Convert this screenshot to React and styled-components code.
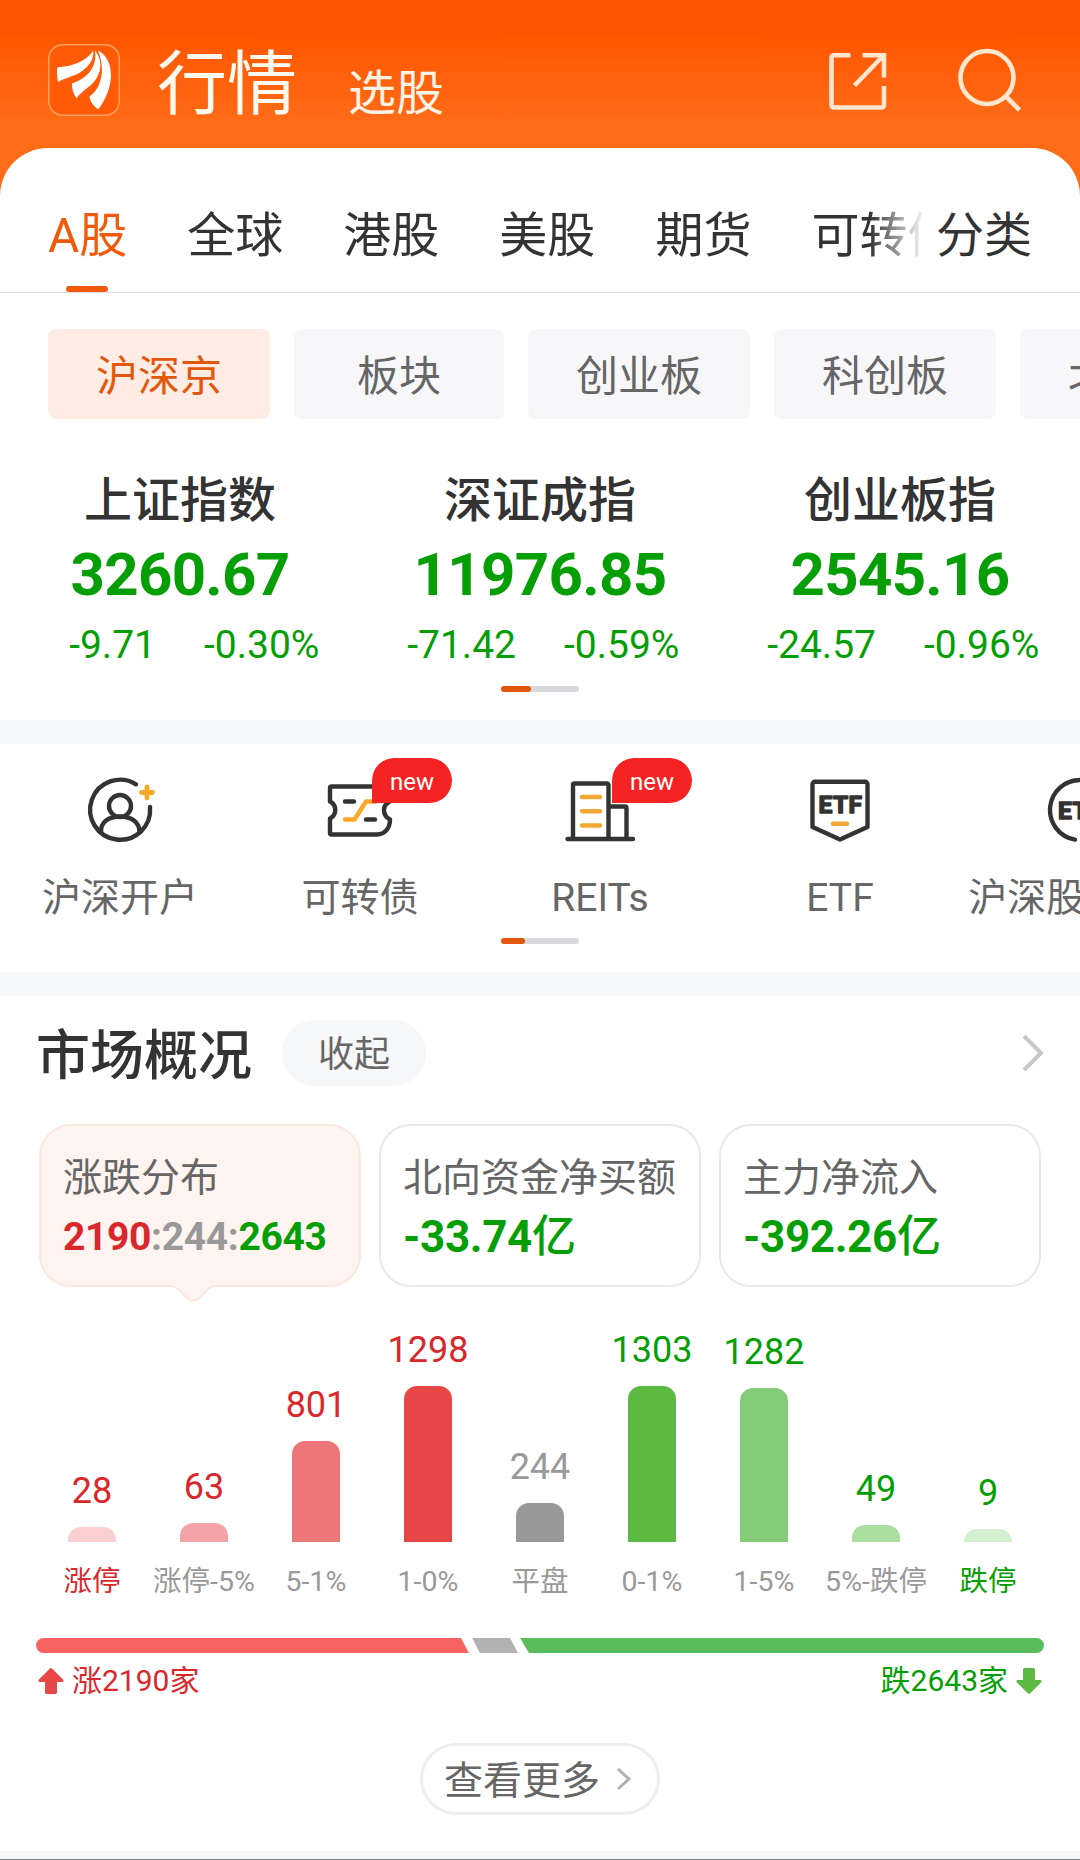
import React from 'react';

import styled, { createGlobalStyle, css } from 'styled-components';

const GlobalStyle = createGlobalStyle`
  * {
    box-sizing: border-box;
  }

  body {
    margin: 0;
    background: #fff;
    font-family: Roboto, 'Noto Sans CJK SC', sans-serif;
    color: #333;
  }
`;

const colors = {
  up: '#d9282b',
  down: '#059f05',
  flat: '#999',
};

const Page = styled.div`
  display: flex;
  flex-direction: column;
  width: 1080px;
  height: 1860px;
  overflow: hidden;
  background: linear-gradient(#ff5500 0, #ff5500 32px, #ff6c18 125px, #ff6c18 200px);
`;

const Header = styled.header`
  display: flex;
  align-items: center;
  height: 148px;
  padding: 12px 58px 0 48px;
`;

const Title = styled.h1`
  margin: 9px 0 0 37px;
  font-size: 70px;
  font-weight: 400;
  line-height: 80px;
  color: #fffaf0;
`;

const SubTitle = styled.span`
  margin: 27px auto 0 51px;
  font-size: 48px;
  line-height: 60px;
  color: #fff3e6;
`;

const HeaderIcons = styled.div`
  display: flex;
  align-items: center;
  gap: 68px;
`;

const Sheet = styled.main`
  flex: 1;
  display: flex;
  flex-direction: column;
  background: #fff;
  border-radius: 48px 48px 0 0;
`;

const TabBar = styled.nav`
  display: flex;
  height: 145px;
  padding: 0 48px;
  border-bottom: 1px solid #dedede;
`;

const TabScroll = styled.div`
  display: flex;
  gap: 60px;
  width: 874px;
  margin-right: 14px;
  overflow: hidden;
  white-space: nowrap;
  mask-image: linear-gradient(90deg, #000 822px, rgba(0, 0, 0, 0.2) 866px, transparent 880px);
`;

const Tab = styled.div`
  display: flex;
  flex-direction: column;
  align-items: center;
  justify-content: flex-end;
  flex-shrink: 0;
  font-size: 48px;
  line-height: 60px;
  color: ${({ $active }) => ($active ? '#f05a0a' : '#333')};

  &::after {
    content: '';
    width: 42px;
    height: 6px;
    margin: 20px 2px 0 0;
    border-radius: 3px;
    background: ${({ $active }) => ($active ? '#f05a0a' : 'transparent')};
  }
`;

const Chips = styled.div`
  display: flex;
  gap: 24px;
  padding: 36px 0 0 48px;
  overflow: hidden;
`;

const Chip = styled.div`
  flex-shrink: 0;
  min-width: 210px;
  height: 90px;
  padding: 0 48px;
  border-radius: 8px;
  font-size: 42px;
  line-height: 96px;
  text-align: center;
  white-space: nowrap;
  color: ${({ $active }) => ($active ? '#e2570c' : '#666')};
  background: ${({ $active }) => ($active ? '#ffede5' : '#f7f7f9')};
`;

const Indices = styled.section`
  display: grid;
  grid-template-columns: repeat(3, 360px);
  padding-top: 52px;
`;

const IndexCard = styled.div`
  display: flex;
  flex-direction: column;
  align-items: center;
  color: ${colors.down};
`;

const IndexName = styled.div`
  font-size: 48px;
  font-weight: 500;
  line-height: 60px;
  color: #333;
`;

const IndexValue = styled.div`
  margin-top: 9px;
  font-size: 60px;
  font-weight: 700;
  line-height: 70px;
  letter-spacing: -0.7px;
`;

const IndexChange = styled.div`
  display: grid;
  grid-template-columns: 1fr 1fr;
  column-gap: 48px;
  width: 100%;
  margin-top: 12px;
  font-size: 39px;
  line-height: 46px;

  span:first-child {
    text-align: right;
  }
`;

const Pager = styled.div`
  width: 78px;
  height: 6px;
  margin: ${({ $top }) => $top}px auto 28px;
  border-radius: 3px;
  background: #d8d9dd;

  &::before {
    content: '';
    display: block;
    width: ${({ $thumb }) => $thumb}px;
    height: 6px;
    border-radius: 3px;
    background: #e2570c;
  }
`;

const Divider = styled.div`
  flex-shrink: 0;
  height: 24px;
  background: #f6f7f9;
`;

const Entries = styled.section`
  display: flex;
  padding-top: 26px;
  overflow: hidden;
`;

const Entry = styled.div`
  position: relative;
  display: flex;
  flex-direction: column;
  align-items: center;
  flex: 0 0 240px;
  font-size: 39px;
  line-height: 48px;
  white-space: nowrap;
  color: #666;

  svg {
    margin-bottom: 24px;
  }
`;

const Badge = styled.span`
  position: absolute;
  top: -12px;
  left: 132px;
  width: 80px;
  height: 45px;
  border-radius: 23px 23px 23px 0;
  background: #f52323;
  font-size: 24px;
  line-height: 49px;
  text-align: center;
  color: #fff;
`;

const Overview = styled.section`
  display: flex;
  flex-direction: column;
  flex: 1;
  padding: 24px 36px 0;
`;

const OverviewHead = styled.div`
  display: flex;
  align-items: center;
  height: 66px;
`;

const OverviewTitle = styled.h2`
  margin: 7px 0 0;
  font-size: 54px;
  font-weight: 500;
  line-height: 66px;
`;

const Collapse = styled.div`
  width: 144px;
  height: 66px;
  margin: 0 auto 0 30px;
  border-radius: 33px;
  background: #f6f7f9;
  font-size: 36px;
  line-height: 71px;
  text-align: center;
  color: #666;
`;

const Cards = styled.div`
  display: flex;
  gap: 18px;
  padding: 38px 3px 0;
`;

const Card = styled.div`
  position: relative;
  flex: 1;
  height: 163px;
  padding: 27px 0 0 22px;
  border: 2px solid #e8e8e8;
  border-radius: 32px;
  white-space: nowrap;

  ${({ $active }) =>
    $active &&
    css`
      border-color: #fde8e0;
      background: #fff4ef;
    `}
`;

const Tail = styled.svg`
  position: absolute;
  left: 132px;
  top: 159px;
`;

const CardLabel = styled.div`
  font-size: 39px;
  line-height: 50px;
  color: #666;
`;

const CardValue = styled.div`
  margin-top: 8px;
  font-size: ${({ $size }) => $size}px;
  font-weight: 700;
  line-height: 52px;
  letter-spacing: -0.35px;
  color: ${colors.down};
`;

const CjkUnit = styled.span`
  font-weight: 500;
`;

const Tone = styled.span`
  color: ${({ $tone }) => colors[$tone]};
`;

const Chart = styled.div`
  display: grid;
  grid-template-columns: repeat(9, 112px);
  height: 313px;
`;

const Column = styled.div`
  display: flex;
  flex-direction: column;
  align-items: center;
  justify-content: flex-end;
`;

const BarValue = styled.div`
  margin-bottom: 15px;
  font-size: 36px;
  line-height: 42px;
  color: ${({ $tone }) => colors[$tone]};
`;

const Bar = styled.div`
  width: 48px;
  border-radius: 13px 13px 0 0;
  background: ${({ $color }) => $color};
`;

const BarLabel = styled.div`
  margin-top: 22px;
  font-size: 28.5px;
  line-height: 36px;
  white-space: nowrap;
  color: ${({ $tone }) => colors[$tone]};
`;

const Ratio = styled.svg`
  display: block;
  margin-top: 38px;
`;

const RatioText = styled.div`
  display: flex;
  justify-content: space-between;
  margin-top: 8px;
  padding: 0 2px;
  font-size: 30px;
  line-height: 40px;
`;

const RatioSide = styled.div`
  display: flex;
  align-items: center;
  gap: 8px;
  color: ${({ $tone }) => colors[$tone]};
`;

const More = styled.div`
  display: flex;
  align-items: center;
  align-self: center;
  gap: 16px;
  width: 240px;
  height: 72px;
  margin-top: 42px;
  padding-left: 21px;
  border: 3px solid #eee;
  border-radius: 36px;
  font-size: 39px;
  line-height: 66px;
  color: #666;

  span {
    padding-top: 3px;
  }
`;

const BottomEdge = styled.div`
  flex-shrink: 0;
  height: 9px;
  border-bottom: 1px solid #808285;
  background: #f6f7f9;
`;

const Logo = () => (
  <svg width="72" height="72" viewBox="0 0 72 72">
    <rect x="0.75" y="0.75" width="70.5" height="70.5" rx="14" fill="#ff5a05" stroke="#ffa05c" strokeWidth="1.5" />
    <g fill="#fff">
      <path d="M9.2 23.4C24 22.5 38 18 45.2 6.6C46 15 42 22 32 28.5C25 32.5 16 34.5 10 38C9 33 8.8 28 9.2 23.4Z" />
      <path d="M47 6.6C53 14 54.5 24 49 33.5C44.5 42 34.5 46 28.5 54.3C25.5 50 23.8 45 24 39.5C34 36.5 50 27 47 6.6Z" />
      <path d="M50 6.6C58.5 11 63 20 63 31C63 43 57.5 56 50.3 65.5C46 62.5 42.5 58.5 41.5 52.6C50 47 59.5 31 50 6.6Z" />
    </g>
  </svg>
);

const ShareIcon = () => (
  <svg width="60" height="60" viewBox="0 0 60 60" fill="none" stroke="#ffe6cf" strokeWidth="4.6">
    <path d="M22.5 5.2H6a2.5 2.5 0 0 0-2.5 2.5V55a2.5 2.5 0 0 0 2.5 2.5H53.5a2.5 2.5 0 0 0 2.5-2.5V36" />
    <path d="M34.5 5.2H56V27.5M55 6L26.5 35.5" />
  </svg>
);

const SearchIcon = () => (
  <svg width="66" height="66" viewBox="0 0 66 66" fill="none" stroke="#ffe6cf" strokeWidth="4.6">
    <circle cx="31" cy="30.5" r="26.5" />
    <path d="M50 49.5L63.5 63" />
  </svg>
);

const Chevron = ({ width, height, color, stroke }) => (
  <svg width={width} height={height} fill="none" stroke={color} strokeWidth={stroke}>
    <path d={`M2 2L${width - 3} ${height / 2}L2 ${height - 2}`} />
  </svg>
);

const EntryIcon = ({ children }) => (
  <svg width="80" height="80" viewBox="0 0 80 80" fill="none" stroke="#333" strokeWidth="4.4" strokeLinecap="round" strokeLinejoin="round">
    {children}
  </svg>
);

const AccountIcon = () => (
  <EntryIcon>
    <path d="M56 14.3A30 30 0 1 0 70 37" />
    <circle cx="40" cy="36" r="11" />
    <path d="M21 62.5C20.5 52 28.5 46.5 40 46.5S59.5 52 59.5 62.5" />
    <path d="M67 17V28M61.5 22.5H72.5" stroke="#f9a827" strokeWidth="4.8" />
  </EntryIcon>
);

const BondIcon = () => (
  <EntryIcon>
    <path d="M56 16.5H11.5a1.500 1.500 0 0 0-1.5 1.5V31.5C17 35 17 45 10 48.5V63a1.500 1.500 0 0 0 1.5 1.5H57C65 64.500 70 58 70 49.500C62 45 62 35 70 31.5" />
    <path d="M25 31.5H34M46 49.5H55" />
    <path d="M25 49.5H34.500L46 31.5H56" stroke="#f9a827" />
  </EntryIcon>
);

const ReitsIcon = () => (
  <EntryIcon>
    <path d="M13 68V15a1.500 1.500 0 0 1 1.500-1.500H47a1.500 1.500 0 0 1 1.500 1.500V68" />
    <path d="M49 36.5H65a1.500 1.500 0 0 1 1.500 1.500V68M7.500 69H73" />
    <path d="M22 27H40M22 41.200H40M22 55.500H40" stroke="#f3a735" />
  </EntryIcon>
);

const IconText = (props) => (
  <text
    fill="#333"
    stroke="#333"
    strokeWidth="1.5"
    fontFamily="Roboto, sans-serif"
    fontWeight="700"
    fontSize="24.5"
    letterSpacing="0.5"
    textAnchor="middle"
    {...props}
  >
    ETF
  </text>
);

const EtfIcon = () => (
  <EntryIcon>
    <path d="M15 11.7H65a2.500 2.500 0 0 1 2.500 2.500V57L40 69.500L12.500 57V14.200a2.500 2.500 0 0 1 2.500-2.500Z" />
    <IconText x="40.5" y="43" />
    <path d="M33 53.8H47" stroke="#f3a735" />
  </EntryIcon>
);

const StockEtfIcon = () => (
  <EntryIcon>
    <path d="M35 69.6A30 30 0 1 1 70 40" />
    <IconText x="40" y="49" />
  </EntryIcon>
);

const Arrow = ({ color, down }) => (
  <svg width="26" height="28" viewBox="0 0 26 28">
    <path
      d="M12 1.5a1.500 1.500 0 0 1 2 0L25 12.500Q26.500 15 24 15H19V25.500a1.500 1.500 0 0 1-1.500 1.500H8.500a1.500 1.500 0 0 1-1.500-1.500V15H2Q-.5 15 1 12.500Z"
      fill={color}
      transform={down ? 'rotate(180 13 14)' : undefined}
    />
  </svg>
);

const tabs = ['A股', '全球', '港股', '美股', '期货', '可转债'];

const chips = ['沪深京', '板块', '创业板', '科创板', '北交所'];

const indices = [
  { name: '上证指数', value: '3260.67', change: '-9.71', percent: '-0.30%' },
  { name: '深证成指', value: '11976.85', change: '-71.42', percent: '-0.59%' },
  { name: '创业板指', value: '2545.16', change: '-24.57', percent: '-0.96%' },
];

const entries = [
  { label: '沪深开户', Icon: AccountIcon },
  { label: '可转债', Icon: BondIcon, isNew: true },
  { label: 'REITs', Icon: ReitsIcon, isNew: true },
  { label: 'ETF', Icon: EtfIcon },
  { label: '沪深股票ETF', Icon: StockEtfIcon },
];

const bars = [
  { label: '涨停', value: 28, height: 15, color: '#fbcfd0', tone: 'up', strong: true },
  { label: '涨停-5%', value: 63, height: 19, color: '#f4a4a9', tone: 'up' },
  { label: '5-1%', value: 801, height: 101, color: '#ed7678', tone: 'up' },
  { label: '1-0%', value: 1298, height: 156, color: '#e74747', tone: 'up' },
  { label: '平盘', value: 244, height: 39, color: '#999', tone: 'flat' },
  { label: '0-1%', value: 1303, height: 156, color: '#5cb942', tone: 'down' },
  { label: '1-5%', value: 1282, height: 154, color: '#84cc78', tone: 'down' },
  { label: '5%-跌停', value: 49, height: 17, color: '#aadf9f', tone: 'down' },
  { label: '跌停', value: 9, height: 13, color: '#d5f0d0', tone: 'down', strong: true },
];

const App = () => {
  return (
    <>
      <GlobalStyle />
      <Page>
        <Header>
          <Logo />
          <Title>行情</Title>
          <SubTitle>选股</SubTitle>
          <HeaderIcons>
            <ShareIcon />
            <SearchIcon />
          </HeaderIcons>
        </Header>
        <Sheet>
          <TabBar>
            <TabScroll>
              {tabs.map((tab, i) => (
                <Tab key={tab} $active={i === 0}>
                  {tab}
                </Tab>
              ))}
            </TabScroll>
            <Tab>分类</Tab>
          </TabBar>
          <Chips>
            {chips.map((chip, i) => (
              <Chip key={chip} $active={i === 0}>
                {chip}
              </Chip>
            ))}
          </Chips>
          <Indices>
            {indices.map(({ name, value, change, percent }) => (
              <IndexCard key={name}>
                <IndexName>{name}</IndexName>
                <IndexValue>{value}</IndexValue>
                <IndexChange>
                  <span>{change}</span>
                  <span>{percent}</span>
                </IndexChange>
              </IndexCard>
            ))}
          </Indices>
          <Pager $top={18} $thumb={30} />
          <Divider />
          <Entries>
            {entries.map(({ label, Icon, isNew }) => (
              <Entry key={label}>
                <Icon />
                {label}
                {isNew && <Badge>new</Badge>}
              </Entry>
            ))}
          </Entries>
          <Pager $top={16} $thumb={24} />
          <Divider />
          <Overview>
            <OverviewHead>
              <OverviewTitle>市场概况</OverviewTitle>
              <Collapse>收起</Collapse>
              <Chevron width={22} height={38} color="#c8c8c8" stroke={4} />
            </OverviewHead>
            <Cards>
              <Card $active>
                <CardLabel>涨跌分布</CardLabel>
                <CardValue $size={39}>
                  <Tone $tone="up">2190</Tone>
                  <Tone $tone="flat">:244:</Tone>
                  <Tone $tone="down">2643</Tone>
                </CardValue>
                <Tail width="40" height="18" viewBox="0 0 40 18">
                  <path d="M0 0V1.5Q3 2 5 4L14 13Q20 18 26 13L35 4Q37 2 40 1.5V0Z" fill="#fff4ef" />
                  <path d="M0 2Q3 2 5 4L14 13Q20 18 26 13L35 4Q37 2 40 2" fill="none" stroke="#fde8e0" strokeWidth="2" />
                </Tail>
              </Card>
              <Card>
                <CardLabel>北向资金净买额</CardLabel>
                <CardValue $size={44}>
                  -33.74<CjkUnit>亿</CjkUnit>
                </CardValue>
              </Card>
              <Card>
                <CardLabel>主力净流入</CardLabel>
                <CardValue $size={44}>
                  -392.26<CjkUnit>亿</CjkUnit>
                </CardValue>
              </Card>
            </Cards>
            <Chart>
              {bars.map(({ label, value, height, color, tone, strong }) => (
                <Column key={label}>
                  <BarValue $tone={tone}>{value}</BarValue>
                  <Bar $color={color} style={{ height }} />
                  <BarLabel $tone={strong ? tone : 'flat'}>{label}</BarLabel>
                </Column>
              ))}
            </Chart>
            <Ratio width="1008" height="15" viewBox="0 0 1008 15">
              <path d="M7.5 0H425L433 15H7.5a7.5 7.5 0 0 1 0-15Z" fill="#f66361" />
              <path d="M436 0H474L482 15H444Z" fill="#b2b2b2" />
              <path d="M484 0H1000.5a7.5 7.5 0 0 1 0 15H493Z" fill="#5abd5c" />
            </Ratio>
            <RatioText>
              <RatioSide $tone="up">
                <Arrow color="#e74747" />
                涨2190家
              </RatioSide>
              <RatioSide $tone="down">
                跌2643家
                <Arrow color="#5cb942" down />
              </RatioSide>
            </RatioText>
            <More>
              <span>查看更多</span>
              <Chevron width={16} height={24} color="#b0b0b0" stroke={3} />
            </More>
          </Overview>
          <BottomEdge />
        </Sheet>
      </Page>
    </>
  );
};

export default App;
